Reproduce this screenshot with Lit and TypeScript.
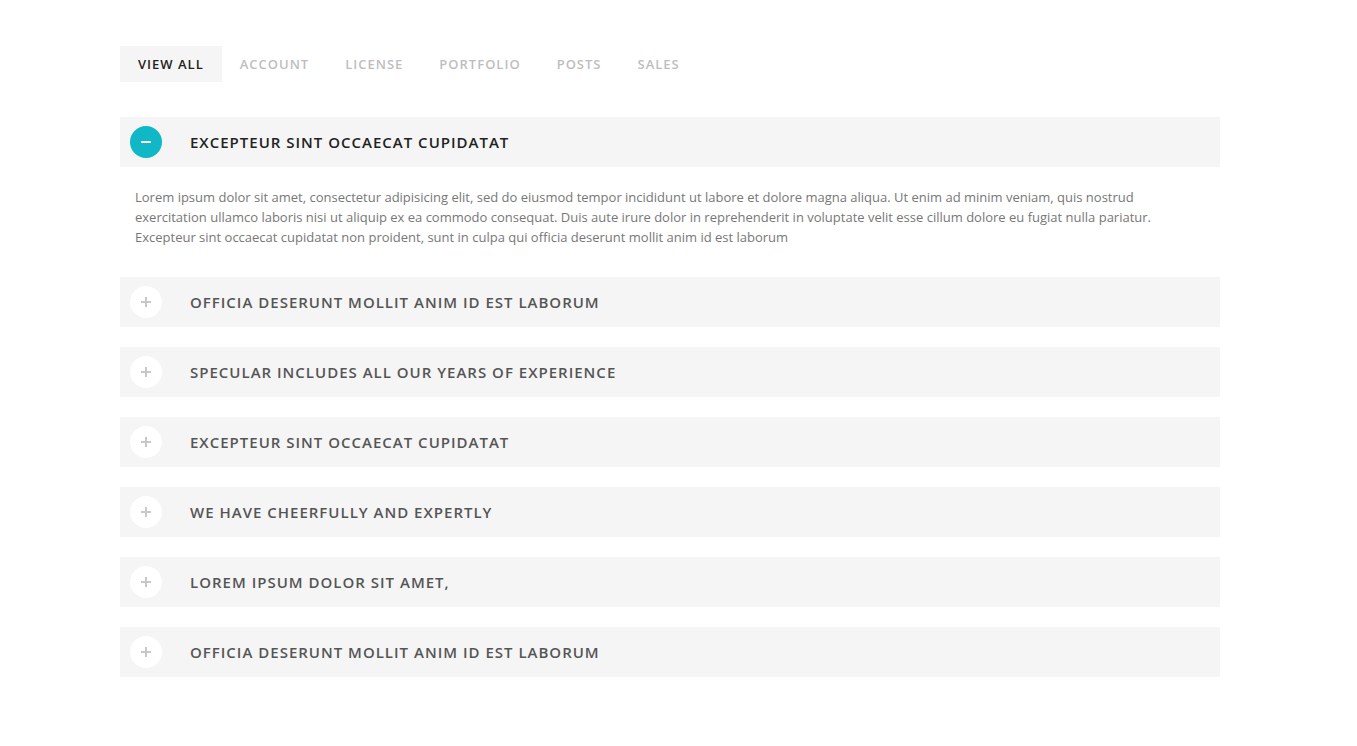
import { LitElement, html, css } from "lit";
import { customElement, state } from "lit/decorators.js";
import { classMap } from "lit/directives/class-map.js";

const FILTERS = ["View all", "Account", "License", "Portfolio", "Posts", "Sales"];

const BODY =
  "Lorem ipsum dolor sit amet, consectetur adipisicing elit, sed do eiusmod tempor incididunt ut labore et dolore magna aliqua. Ut enim ad minim veniam, quis nostrud exercitation ullamco laboris nisi ut aliquip ex ea commodo consequat. Duis aute irure dolor in reprehenderit in voluptate velit esse cillum dolore eu fugiat nulla pariatur. Excepteur sint occaecat cupidatat non proident, sunt in culpa qui officia deserunt mollit anim id est laborum";

const ITEMS = [
  "Excepteur sint occaecat cupidatat",
  "Officia deserunt mollit anim id est laborum",
  "Specular includes all our years of experience",
  "Excepteur sint occaecat cupidatat",
  "We have cheerfully and expertly",
  "Lorem ipsum dolor sit amet,",
  "Officia deserunt mollit anim id est laborum",
];

const MINUS = "M11 15h10v2H11z";
const PLUS = "M15 11h2v4h4v2h-4v4h-2v-4h-4v-2h4z";

@customElement("app-root")
export class AppRoot extends LitElement {
  static styles = css`
    :host {
      display: block;
      box-sizing: border-box;
      padding: 46px 137px 46px 120px;
      background: #fff;
      font-family: "Open Sans", sans-serif;
    }
    button {
      border: 0;
      margin: 0;
      background: none;
      font-family: inherit;
      text-transform: uppercase;
      letter-spacing: 1px;
      cursor: pointer;
    }
    .filters {
      display: flex;
      flex-wrap: wrap;
      margin-bottom: 35px;
    }
    .filter {
      padding: 0 18px;
      font-size: 13px;
      line-height: 36px;
      font-weight: 600;
      color: #bebebe;
    }
    .filter.active {
      background: #f5f5f5;
      color: #222;
    }
    .list {
      display: flex;
      flex-direction: column;
      gap: 20px;
    }
    h3 {
      margin: 0;
    }
    .head {
      display: flex;
      align-items: center;
      gap: 28px;
      width: 100%;
      min-height: 50px;
      padding: 0 10px;
      background: #f5f5f5;
      color: #555;
      font-size: 15px;
      line-height: 20px;
      font-weight: 600;
      text-align: left;
    }
    .head.open {
      color: #222;
    }
    .icon {
      flex: none;
      width: 32px;
      height: 32px;
      border-radius: 50%;
      background: #fff;
      color: #c8c8c8;
    }
    .open .icon {
      background: #10b8c7;
      color: #fff;
    }
    .icon svg {
      display: block;
    }
    .body {
      margin: 0;
      padding: 20px 15px 10px;
      font-size: 13px;
      line-height: 20px;
      color: #777;
    }
  `;

  @state() private filter = 0;
  @state() private open = 0;

  render() {
    return html`
      <nav class="filters" aria-label="Categories">
        ${FILTERS.map(
          (name, i) => html`<button
            type="button"
            class=${classMap({ filter: true, active: i === this.filter })}
            aria-pressed=${i === this.filter}
            @click=${() => (this.filter = i)}
          >${name}</button>`
        )}
      </nav>
      <div class="list">
        ${ITEMS.map((title, i) => {
          const open = i === this.open;
          return html`<section>
            <h3>
              <button
                type="button"
                class=${classMap({ head: true, open })}
                aria-expanded=${open}
                @click=${() => (this.open = open ? -1 : i)}
              >
                <span class="icon">
                  <svg width="32" height="32" viewBox="0 0 32 32" fill="currentColor" aria-hidden="true">
                    <path d=${open ? MINUS : PLUS} />
                  </svg>
                </span>
                <span>${title}</span>
              </button>
            </h3>
            ${open ? html`<p class="body">${BODY}</p>` : null}
          </section>`;
        })}
      </div>
    `;
  }
}
